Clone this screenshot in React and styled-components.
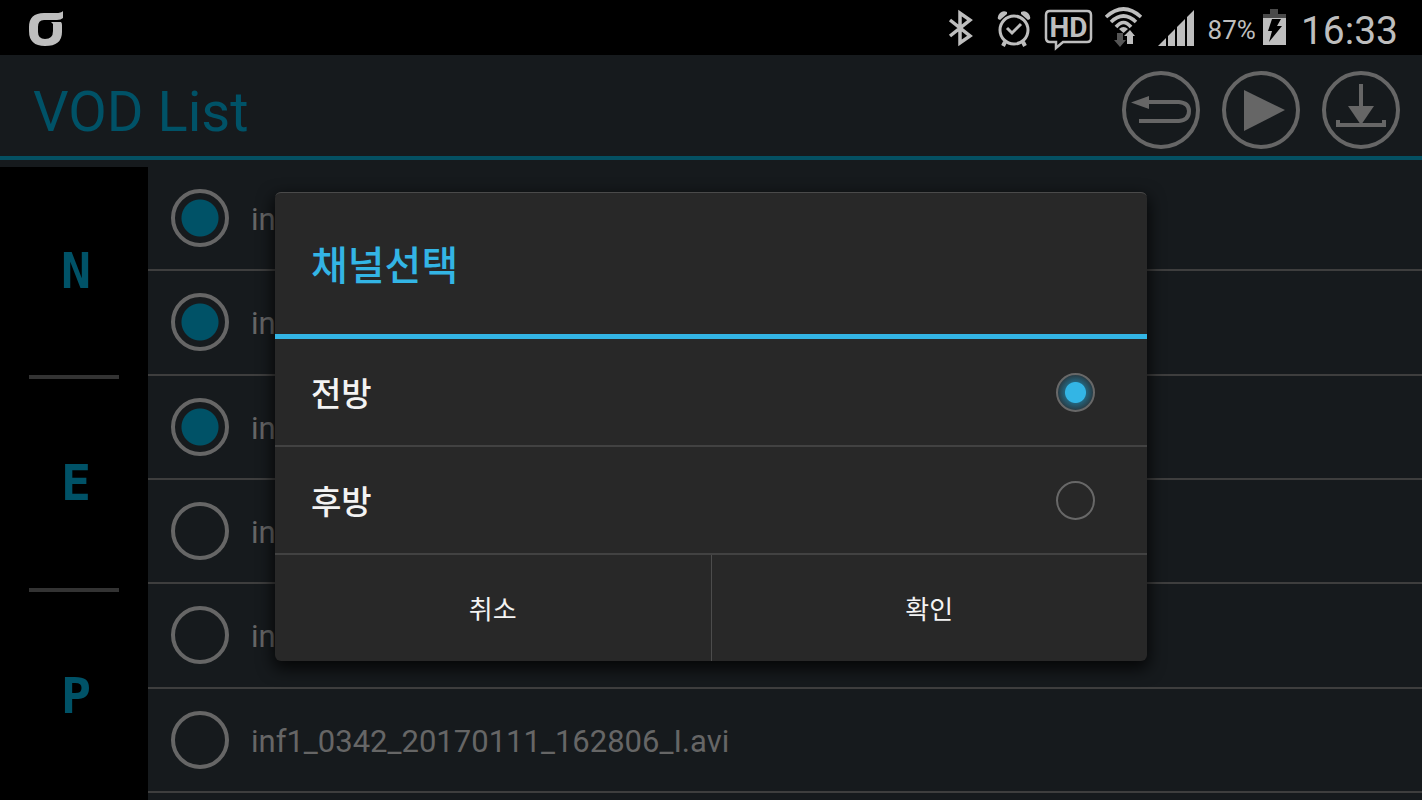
import React, { useState } from "react";
import styled, { createGlobalStyle } from "styled-components";

const GlobalStyle = createGlobalStyle`
  *, *::before, *::after { box-sizing: border-box; }
  body {
    margin: 0;
    background: #161a1d;
    font-family: Roboto, "Noto Sans CJK KR", sans-serif;
  }
  button, input { font: inherit; margin: 0; }
`;

const Screen = styled.div`
  display: flex;
  flex-direction: column;
  height: 100vh;
  overflow: hidden;
`;

const StatusBar = styled.header`
  display: flex;
  align-items: center;
  flex: none;
  height: 55px;
  padding: 0 24px 0 28px;
  background: #000;
  color: #bebebe;
`;

const StatusIcons = styled.div`
  display: flex;
  align-items: center;
  margin-left: auto;
`;

const StatusIcon = styled.svg`
  display: block;
  flex: none;
  width: ${(p) => p.$w}px;
  height: 44px;
  margin-right: ${(p) => p.$gap || 0}px;
  overflow: visible;
`;

const Percent = styled.span`
  margin-right: 7px;
  padding-top: 4px;
  font-size: 26px;
  line-height: 32px;
`;

const Clock = styled.time`
  padding-top: 6px;
  font-size: 39px;
  line-height: 48px;
`;

const Stage = styled.div`
  position: relative;
  display: flex;
  flex-direction: column;
  flex: 1;
  min-height: 0;
`;

const TitleBar = styled.div`
  display: flex;
  align-items: center;
  justify-content: space-between;
  flex: none;
  height: 105px;
  padding: 9px 22px 0 33px;
  border-bottom: 4px solid #045062;
`;

const Title = styled.h1`
  margin: 0;
  padding-top: 4px;
  color: #005267;
  font-size: 56px;
  font-weight: 400;
  line-height: 64px;
`;

const Actions = styled.div`
  display: flex;
  gap: 22px;
`;

const ActionButton = styled.button`
  width: 78px;
  height: 78px;
  padding: 0;
  border: 4px solid #666;
  border-radius: 50%;
  background: none;
  color: #666;

  svg { display: block; width: 70px; height: 70px; }
`;

const Main = styled.main`
  display: flex;
  flex: 1;
  min-height: 0;
  padding-top: 7px;
`;

const SideTabs = styled.nav`
  display: flex;
  flex-direction: column;
  align-items: center;
  flex: none;
  width: 148px;
  background: #000;
`;

const SideTab = styled.button`
  flex: 1;
  width: 90px;
  padding: 0 0 0 4px;
  border: 0;
  border-bottom: ${(p) => (p.$last ? 0 : 4)}px solid #333;
  background: none;
  color: #005267;
  font-family: "DejaVu Sans Mono", monospace;
  font-size: 50px;
  font-weight: 700;
  line-height: 64px;
`;

const FileList = styled.ul`
  display: flex;
  flex-direction: column;
  flex: 1;
  margin: 0;
  padding: 0 0 7px;
  list-style: none;
`;

const FileRow = styled.li`
  flex: 1;
  border-bottom: 2px solid #3e3e3e;
`;

const FileLabel = styled.label`
  display: flex;
  align-items: center;
  height: 100%;
  padding-left: 23px;
  color: #666;
  font-size: 31px;
  line-height: 36px;

  span { margin-left: 22px; padding-top: 4px; }
`;

const FileCheck = styled.input.attrs({ type: "checkbox" })`
  appearance: none;
  width: 58px;
  height: 58px;
  border: 4px solid #666;
  border-radius: 50%;

  &:checked {
    background: radial-gradient(circle, #005267 18px, transparent 19px);
  }
`;

const Overlay = styled.div`
  position: absolute;
  inset: 0;
  display: flex;
  align-items: center;
  justify-content: center;
  padding-bottom: 2px;
`;

const Dialog = styled.form`
  width: 872px;
  max-width: calc(100% - 48px);
  border-radius: 6px;
  background: #282828;
  color: #f3f3f3;
  box-shadow: inset 0 2px 0 -1px #4a4a4a, 0 6px 16px 2px rgba(0, 0, 0, 0.75);
`;

const DialogTitle = styled.h2`
  display: flex;
  align-items: center;
  height: 147px;
  margin: 0;
  padding: 8px 36px 0;
  border-bottom: 5px solid #33b5e5;
  color: #33b5e5;
  font-size: 40px;
  font-weight: 500;
  line-height: 48px;
`;

const Option = styled.label`
  display: flex;
  align-items: center;
  justify-content: space-between;
  height: 108px;
  padding: 0 52px 0 36px;
  border-bottom: 2px solid #424242;
  font-size: 33px;
  font-weight: 500;
  line-height: 40px;

  span { padding-top: 6px; }
`;

const OptionRadio = styled.input.attrs({ type: "radio" })`
  appearance: none;
  width: 39px;
  height: 39px;
  border: 2px solid #686868;
  border-radius: 50%;

  &:checked {
    background:
      radial-gradient(circle, #33b5e5 10px, transparent 11px),
      radial-gradient(circle, #24627a 11px, #293a42 18px);
  }
`;

const DialogActions = styled.div`
  display: flex;
`;

const DialogButton = styled.button`
  flex: 1;
  height: 106px;
  padding: 4px 0 0;
  border: 0;
  border-left: ${(p) => (p.$divided ? 1 : 0)}px solid #4c4c4c;
  background: none;
  color: inherit;
  font-size: 26px;
  line-height: 32px;
`;

const files = [
  { id: 1, name: "inf1", checked: true },
  { id: 2, name: "inf1", checked: true },
  { id: 3, name: "inf1", checked: true },
  { id: 4, name: "inf1", checked: false },
  { id: 5, name: "inf1", checked: false },
  { id: 6, name: "inf1_0342_20170111_162806_I.avi", checked: false },
];

function CarrierLogo() {
  return (
    <StatusIcon $w={35} viewBox="0 0 35 44" aria-hidden="true">
      <path
        fill="#bebebe"
        d="M35 5V12Q33 14 29 14H16Q10 14 10 21V26Q10 33 17 33Q25 33 25 25V18L23 16H33Q34 17 34 19V26Q34 40 17 40Q1 40 1 25V21Q1 7 16 7H28Q33 7 35 5Z"
      />
    </StatusIcon>
  );
}

function BluetoothIcon() {
  return (
    <StatusIcon $w={26} $gap={23} viewBox="0 0 26 44" aria-hidden="true">
      <path
        d="M2 14L22 30L12 37V7L22 14L2 30"
        fill="none"
        stroke="#bebebe"
        strokeWidth="3.5"
      />
    </StatusIcon>
  );
}

function AlarmIcon() {
  return (
    <StatusIcon $w={34} $gap={13} viewBox="0 0 34 44" aria-hidden="true">
      <g fill="none" stroke="#bebebe">
        <circle cx="17" cy="24" r="14" strokeWidth="3" />
        <path d="M10 22L15 27L24 18" strokeWidth="3" />
        <path d="M8 36L6 40M26 36L28 40" strokeWidth="4" />
      </g>
      <path
        fill="#bebebe"
        d="M1 13Q0 10 3 7Q6 4 10 6L10 8L3 14ZM33 13Q34 10 31 7Q28 4 24 6L24 8L31 14Z"
      />
    </StatusIcon>
  );
}

function HdIcon() {
  return (
    <StatusIcon $w={49} $gap={12} viewBox="0 0 49 44" role="img" aria-label="HD">
      <path
        d="M6 5H43Q47 5 47 9V32Q47 36 43 36H19L12 42V36H6Q2 36 2 32V9Q2 5 6 5Z"
        fill="none"
        stroke="#bebebe"
        strokeWidth="2.5"
      />
      <text
        x="24.5"
        y="31"
        textAnchor="middle"
        fill="#bebebe"
        fontFamily="Roboto, sans-serif"
        fontSize="28"
        fontWeight="700"
      >
        HD
      </text>
    </StatusIcon>
  );
}

function WifiIcon() {
  return (
    <StatusIcon $w={37} $gap={16} viewBox="0 0 37 44" aria-hidden="true">
      <g fill="none" stroke="#bebebe" strokeWidth="3.6">
        <path d="M1 11Q18.500 -5 36 11" />
        <path d="M6 16Q18.500 4 31 16" />
        <path d="M11 21Q18.500 12 26 21" />
      </g>
      <path fill="#bebebe" d="M14 23Q18.500 19 23 23L18.500 27Z" />
      <path fill="#555" d="M12 27H18V34H21L15 41L9 34H12Z" />
      <path fill="#bebebe" d="M25 24L30 30H28V38H22V30H19Z" />
    </StatusIcon>
  );
}

function SignalIcon() {
  return (
    <StatusIcon $w={37} $gap={13} viewBox="0 0 37 44" aria-hidden="true">
      <path
        fill="#bebebe"
        d="M0 40L8 32V40ZM10 30L17 23V40H10ZM19 21L27 13V40H19ZM29 11L36 4V40H29Z"
      />
    </StatusIcon>
  );
}

function BatteryIcon() {
  return (
    <StatusIcon $w={23} $gap={15} viewBox="0 0 23 44" aria-hidden="true">
      <path fill="#4a4a4a" d="M7 3H15V8H23V12H0V8H7Z" />
      <path fill="#bebebe" d="M0 12H23V39H0Z" />
      <path fill="#000" d="M9 13H18L14 20H19L6 36L9 25H5Z" />
    </StatusIcon>
  );
}

function BackIcon() {
  return (
    <svg viewBox="0 0 70 70" aria-hidden="true">
      <path
        d="M20 27H53Q63 28 63 36Q63 45 53 46H13"
        fill="none"
        stroke="currentColor"
        strokeWidth="4"
      />
      <path d="M5 27.500L23 21V34Z" fill="currentColor" />
    </svg>
  );
}

function PlayIcon() {
  return (
    <svg viewBox="0 0 70 70" aria-hidden="true">
      <path d="M18 15L59 35L18 56Z" fill="currentColor" />
    </svg>
  );
}

function DownloadIcon() {
  return (
    <svg viewBox="0 0 70 70" aria-hidden="true">
      <path
        d="M35 9V32M12 45V50H58V45"
        fill="none"
        stroke="currentColor"
        strokeWidth="4"
      />
      <path d="M22 31H48L35 50Z" fill="currentColor" />
    </svg>
  );
}

export default function App() {
  const [selected, setSelected] = useState(files.map((f) => f.checked));
  const [channel, setChannel] = useState("front");

  const toggle = (index) =>
    setSelected((prev) => prev.map((v, i) => (i === index ? !v : v)));

  return (
    <Screen>
      <GlobalStyle />
      <StatusBar>
        <CarrierLogo />
        <StatusIcons>
          <BluetoothIcon />
          <AlarmIcon />
          <HdIcon />
          <WifiIcon />
          <SignalIcon />
          <Percent>87%</Percent>
          <BatteryIcon />
          <Clock>16:33</Clock>
        </StatusIcons>
      </StatusBar>
      <Stage>
        <TitleBar>
          <Title>VOD List</Title>
          <Actions>
            <ActionButton type="button" aria-label="Back">
              <BackIcon />
            </ActionButton>
            <ActionButton type="button" aria-label="Play">
              <PlayIcon />
            </ActionButton>
            <ActionButton type="button" aria-label="Download">
              <DownloadIcon />
            </ActionButton>
          </Actions>
        </TitleBar>
        <Main>
          <SideTabs>
            <SideTab type="button">N</SideTab>
            <SideTab type="button">E</SideTab>
            <SideTab type="button" $last>
              P
            </SideTab>
          </SideTabs>
          <FileList>
            {files.map((file, i) => (
              <FileRow key={file.id}>
                <FileLabel>
                  <FileCheck checked={selected[i]} onChange={() => toggle(i)} />
                  <span>{file.name}</span>
                </FileLabel>
              </FileRow>
            ))}
          </FileList>
        </Main>
        <Overlay>
          <Dialog role="dialog" aria-labelledby="channel-title">
            <DialogTitle id="channel-title">채널선택</DialogTitle>
            <Option>
              <span>전방</span>
              <OptionRadio
                name="channel"
                checked={channel === "front"}
                onChange={() => setChannel("front")}
              />
            </Option>
            <Option>
              <span>후방</span>
              <OptionRadio
                name="channel"
                checked={channel === "rear"}
                onChange={() => setChannel("rear")}
              />
            </Option>
            <DialogActions>
              <DialogButton type="button">취소</DialogButton>
              <DialogButton type="button" $divided>
                확인
              </DialogButton>
            </DialogActions>
          </Dialog>
        </Overlay>
      </Stage>
    </Screen>
  );
}
